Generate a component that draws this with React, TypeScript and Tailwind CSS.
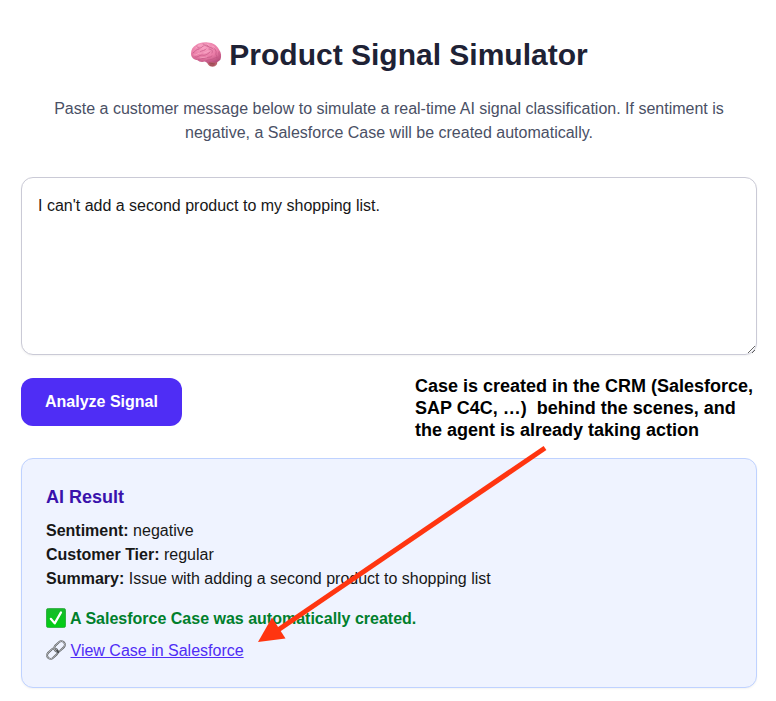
function BrainIcon() {
  return (
    <svg viewBox="0 0 32 28" className="h-[28px] w-[32px] shrink-0" aria-hidden="true">
      <defs>
        <radialGradient id="brain" cx=".42" cy=".25" r=".8">
          <stop offset="0" stopColor="#f9a3c4" />
          <stop offset=".6" stopColor="#e97ba6" />
          <stop offset="1" stopColor="#b84f7c" />
        </radialGradient>
      </defs>
      <path d="M16.500 20c1-2 8-2 10.500 0 1 3-1 5.500-4.500 5.700-3.500 0-5-2.500-6-5.700z" fill="#b9606b" />
      <path d="M1 12.500C1 8.500 3 5.500 6 4 9 1.500 14 .8 18 1.500c5 0 9 3 11 7 2.500 3 2.500 7 1.500 10-2 3-6 4-9 2.500-2 1.500-5 1-6.500-.5-3 1-6 .5-7.500-1.500C4 19 1 16.500 1 12.500z" fill="url(#brain)" />
      <g fill="none" stroke="#c25583" strokeWidth=".7" strokeLinecap="round">
        <path d="M3 12c2-1 3-4 6-4M7 5c0 2 3 3 5 1s4-2 6 0M13 3c1 1 4 0 5 2s4 1 5 3M5 16c3 1 4-2 7-2 3 1 6-1 8-3M8 19c2-2 5-1 7-2s5 0 7-2M10 11c2-2 5-1 6-3M19 8c3 0 4 2 3 4M25 7c-1 2 2 3 1 5s2 3 1 5M29 11c-1 1 1 3 0 5M16 20c3-2 5-1 7-2s3-2 5-1" />
      </g>
      <path d="M6 7c1-2 3-3 5-3M14 4c2-1 4 0 5 0M4 14c3 1 4-3 7-2M14 12c2 0 4-2 5-2M10 17c3-1 5 0 7-1M22 5c2 0 3 2 4 3" fill="none" stroke="#ffc5d9" strokeWidth=".7" strokeLinecap="round" opacity=".6" />
      <path d="m19 22 6 1M20 24h4" stroke="#8c414c" strokeWidth=".7" />
    </svg>
  );
}

function CheckIcon() {
  return (
    <svg viewBox="0 0 20 20" className="-mt-0.5 h-5 w-5 shrink-0" aria-hidden="true">
      <defs>
        <linearGradient id="check" x1="0" y1="0" x2="0" y2="1">
          <stop offset="0" stopColor="#18b92c" />
          <stop offset="1" stopColor="#00cf12" />
        </linearGradient>
      </defs>
      <rect x=".4" y=".4" width="19.200" height="19.200" rx="2" fill="url(#check)" stroke="#159e27" strokeWidth=".7" />
      <path d="m4.800 10.800 3.900 4.600 6.300-11" fill="none" stroke="#fff" strokeWidth="2.200" strokeLinecap="round" strokeLinejoin="round" />
    </svg>
  );
}

function LinkIcon() {
  return (
    <svg viewBox="0 0 20 20" className="-mt-0.5 h-5 w-5 shrink-0" fill="none" aria-hidden="true">
      <g transform="translate(6.400 13.600) rotate(-43)">
        <rect x="-6" y="-3.500" width="12" height="7" rx="3.500" stroke="#5d6063" strokeWidth="1.900" />
        <rect x="-6.100" y="-3.600" width="12" height="7" rx="3.500" stroke="#c2c5c7" strokeWidth=".8" />
      </g>
      <g transform="translate(13.600 6.400) rotate(-43)">
        <rect x="-6" y="-3.500" width="12" height="7" rx="3.500" stroke="#5d6063" strokeWidth="1.900" />
        <rect x="-6.100" y="-3.600" width="12" height="7" rx="3.500" stroke="#c2c5c7" strokeWidth=".8" />
      </g>
      <path d="m11.200 10.800 1.200 1.600" stroke="#45484b" strokeWidth="1.800" strokeLinecap="round" />
    </svg>
  );
}

function Arrow() {
  return (
    <svg viewBox="0 0 290 198" className="pointer-events-none absolute left-[257px] top-[445px] h-[198px] w-[290px]" aria-hidden="true">
      <path d="M288 3 21 185" stroke="#ff3510" strokeWidth="5" />
      <path d="m1 197 14-24.500 13.500 21z" fill="#ff3510" />
    </svg>
  );
}

export default function App() {
  return (
    <main className="relative h-[701px] overflow-hidden bg-white pl-[21px] pr-[19px] pt-[37px] font-['Liberation_Sans',Arial,sans-serif] text-base text-[#171717]">
      <h1 className="flex h-9 items-center justify-center gap-[7px] text-[30px] font-bold leading-9 text-[#1e2235]">
        <BrainIcon />
        <span>Product Signal Simulator</span>
      </h1>
      <p className="mt-6 text-center leading-6 text-[#4a5065]">
        Paste a customer message below to simulate a real-time AI signal classification. If sentiment is
        <br />
        negative, a Salesforce Case will be created automatically.
      </p>
      <textarea
        defaultValue="I can't add a second product to my shopping list."
        className="mt-8 block h-[178px] w-full resize rounded-xl border border-[#cacad6] bg-white p-4 leading-6 shadow-xs outline-none"
      />
      <div className="mt-[23px] flex h-12 items-start justify-between">
        <button className="h-12 w-[161px] rounded-xl bg-[#4f2df5] font-bold text-white">Analyze Signal</button>
        <p className="-mt-[3px] w-[342px] whitespace-pre text-[18px] font-bold leading-[22px] text-black">
          {"Case is created in the CRM (Salesforce,\nSAP C4C, …)  behind the scenes, and\nthe agent is already taking action"}
        </p>
      </div>
      <section className="mt-8 h-[230px] rounded-xl border border-[#bfd2ff] bg-[#eff3ff] p-6 shadow-xs">
        <h2 className="mb-2 text-lg font-bold leading-7 text-[#3a12ac]">AI Result</h2>
        <p><strong>Sentiment:</strong> negative</p>
        <p><strong>Customer Tier:</strong> regular</p>
        <p><strong>Summary:</strong> Issue with adding a second product to shopping list</p>
        <p className="mt-4 flex items-center gap-1 font-bold text-[#007f2c]">
          <CheckIcon />
          <span>A Salesforce Case was automatically created.</span>
        </p>
        <p className="mt-2 flex items-center gap-[4.5px]">
          <LinkIcon />
          <a href="#case" className="text-[#4f2df5] underline">View Case in Salesforce</a>
        </p>
      </section>
      <Arrow />
    </main>
  );
}
